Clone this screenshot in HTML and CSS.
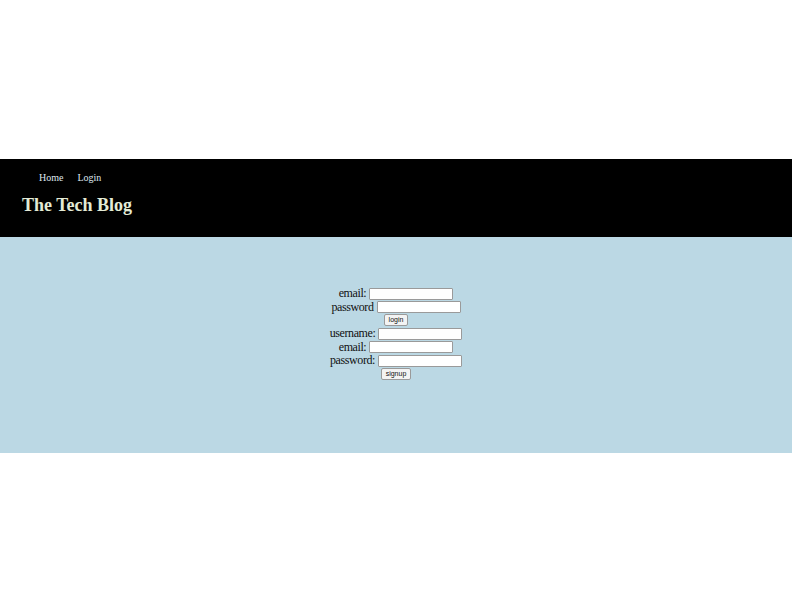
FILE: index.html
```html
<!DOCTYPE html>
<html>
<head>
<meta charset="utf-8">
<link rel="stylesheet" href="styles.css">
</head>
<body>
<div class="top-space"></div>
<header class="site-header">
  <nav class="nav">
    <a href="#">Home</a>
    <a href="#">Login</a>
  </nav>
  <h1 class="title">The Tech Blog</h1>
</header>
<main class="main">
  <form class="form">
    <div class="row"><label>email:</label><input class="field" type="text"></div>
    <div class="row"><label>password</label><input class="field" type="password"></div>
    <div class="row"><button class="btn" type="button">login</button></div>
  </form>
  <form class="form">
    <div class="row"><label>username:</label><input class="field" type="text"></div>
    <div class="row"><label>email:</label><input class="field" type="text"></div>
    <div class="row"><label>password:</label><input class="field" type="password"></div>
    <div class="row"><button class="btn" type="button">signup</button></div>
  </form>
</main>
</body>
</html>
```

FILE: styles.css
```css
html, body {
  margin: 0;
  padding: 0;
  background: #ffffff;
  font-family: "Liberation Serif", "Times New Roman", serif;
}
.top-space {
  height: 159px;
}
.site-header {
  background: #000000;
  height: 78px;
  box-sizing: border-box;
  padding: 13px 0 0 22px;
}
.nav {
  display: flex;
  gap: 14px;
  padding-left: 17px;
  font-size: 10px;
  line-height: 12px;
}
.nav a {
  color: #dfe6ee;
  text-decoration: none;
}
.title {
  margin: 10px 0 0 0;
  font-size: 18px;
  line-height: 22px;
  font-weight: bold;
  color: #e4ebd6;
}
.main {
  background: #bbd8e4;
  height: 216px;
  box-sizing: border-box;
  padding-top: 50px;
  display: flex;
  flex-direction: column;
  align-items: center;
}
.form {
  display: flex;
  flex-direction: column;
  align-items: center;
}
.row {
  display: flex;
  align-items: center;
  justify-content: center;
  gap: 3px;
  height: 13.4px;
  font-size: 12px;
  letter-spacing: -0.4px;
  color: #111;
}
.field {
  width: 84px;
  height: 12px;
  box-sizing: border-box;
  border: 1px solid #9a9a9a;
  border-radius: 1px;
  background: #fff;
  padding: 0;
  margin: 0;
}
.btn {
  font-family: "Liberation Sans", Arial, sans-serif;
  font-size: 7px;
  line-height: 8px;
  letter-spacing: 0;
  height: 12px;
  padding: 0 4px;
  margin: 0;
  border: 1px solid #9a9a9a;
  border-radius: 2px;
  background: #f3f3f3;
  color: #111;
}
```
